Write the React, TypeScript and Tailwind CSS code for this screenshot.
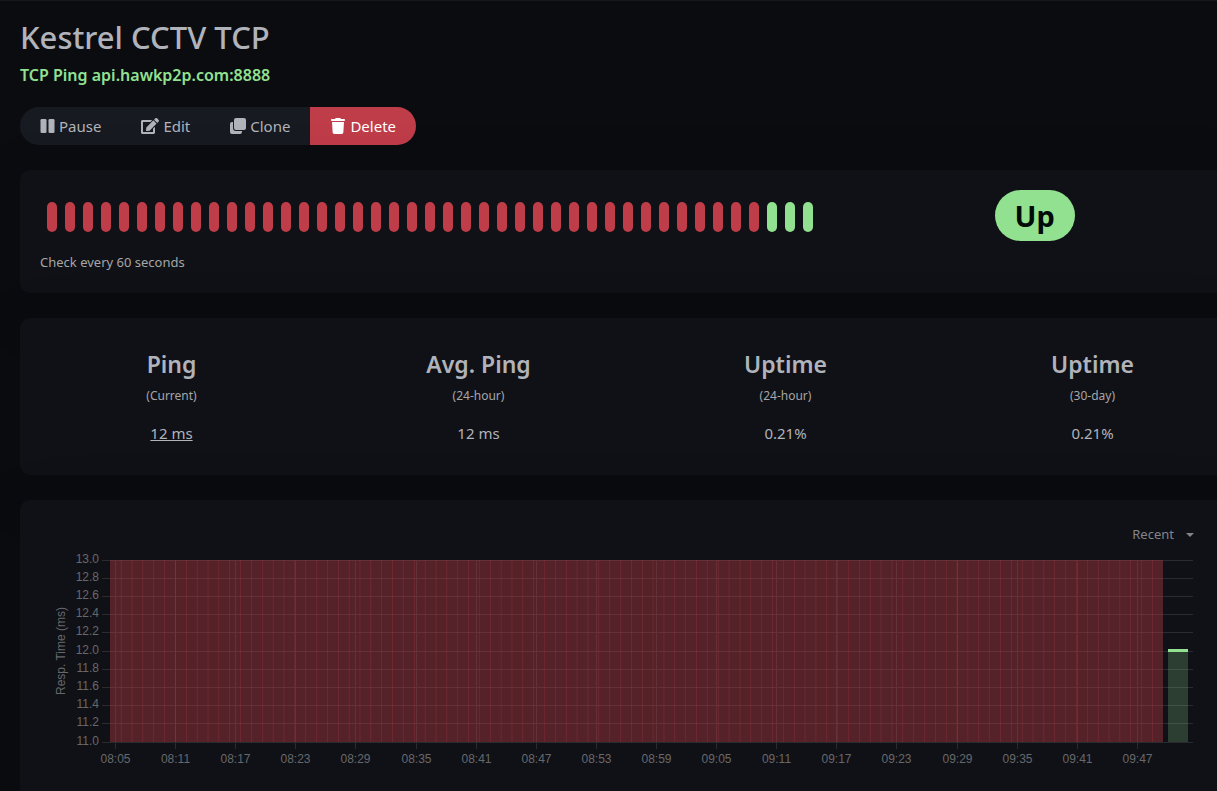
import { FaTrash } from 'react-icons/fa6'
import { FaEdit } from 'react-icons/fa'

interface Stat {
  title: string
  period: string
  value: string
  underline?: boolean
}

const DOWN_BEATS = 40
const UP_BEATS = 3

const beats = [
  ...Array.from({ length: DOWN_BEATS }, () => 'down'),
  ...Array.from({ length: UP_BEATS }, () => 'up'),
]

const stats: Stat[] = [
  { title: 'Ping', period: '(Current)', value: '12 ms', underline: true },
  { title: 'Avg. Ping', period: '(24-hour)', value: '12 ms' },
  { title: 'Uptime', period: '(24-hour)', value: '0.21%' },
  { title: 'Uptime', period: '(30-day)', value: '0.21%' },
]

const yLabels = ['13.0', '12.8', '12.6', '12.4', '12.2', '12.0', '11.8', '11.6', '11.4', '11.2', '11.0']

const xLabels = [
  '08:05', '08:11', '08:17', '08:23', '08:29', '08:35', '08:41', '08:47', '08:53',
  '08:59', '09:05', '09:11', '09:17', '09:23', '09:29', '09:35', '09:41', '09:47',
]

// Plot area inside the chart's own coordinate system
const PLOT = { left: 60, right: 1143, top: 10, bottom: 192 }
const DOWN_END = 1113
const BAR_COUNT = 97

function PauseIcon() {
  return (
    <svg width="15" height="16" viewBox="0 0 15 16" fill="currentColor" aria-hidden="true">
      <rect x="0.5" y="1" width="6" height="14" rx="1.3" />
      <rect x="8.5" y="1" width="6" height="14" rx="1.3" />
    </svg>
  )
}

function CloneIcon() {
  return (
    <svg width="16" height="16" viewBox="0 0 16 16" fill="currentColor" aria-hidden="true">
      <rect x="4" y="0" width="12" height="12" rx="2" />
      <path d="M3 4H2a2 2 0 0 0-2 2v8a2 2 0 0 0 2 2h8a2 2 0 0 0 2-2v-1H6a3 3 0 0 1-3-3z" />
    </svg>
  )
}

function ResponseChart() {
  const rowStep = (PLOT.bottom - PLOT.top) / (yLabels.length - 1)
  const barStep = (DOWN_END - PLOT.left) / BAR_COUNT

  return (
    <svg
      viewBox="0 0 1144 222"
      className="block h-auto w-full font-['Liberation_Sans',sans-serif] text-[12px]"
      role="img"
      aria-label="Response time"
    >
      {yLabels.map((label, i) => {
        const y = Math.floor(PLOT.top + i * rowStep) + 0.5
        return (
          <g key={label}>
            <line x1={52} x2={PLOT.right} y1={y} y2={y} stroke="#292b2f" />
            <text x={49} y={y + 2.5} textAnchor="end" fill="#67686b">{label}</text>
          </g>
        )
      })}
      {xLabels.map((label, i) => {
        const x = Math.floor(65.4 + i * 60.12) + 0.5
        return (
          <g key={label}>
            <line x1={x} x2={x} y1={PLOT.top} y2={199} stroke="#292b2f" />
            <text x={x} y={213} textAnchor="middle" fill="#67686b">{label}</text>
          </g>
        )
      })}
      <text transform="translate(15 101) rotate(-90)" textAnchor="middle" fill="#67686b">
        Resp. Time (ms)
      </text>

      {Array.from({ length: BAR_COUNT }, (_, i) => (
        <rect
          key={i}
          x={PLOT.left + i * barStep}
          y={PLOT.top}
          width={i === BAR_COUNT - 1 ? barStep : barStep + 0.6}
          height={PLOT.bottom - PLOT.top}
          fill="#bf3c49"
          fillOpacity={0.4}
        />
      ))}

      <rect x={1118} y={101} width={20} height={91} fill="#92e191" fillOpacity={0.22} />
      <rect x={1118} y={99} width={20} height={3} fill="#92e191" />
    </svg>
  )
}

export default function App() {
  return (
    <div className="min-h-screen overflow-hidden border-t border-[#16181e] bg-[#0b0c10] pl-5 font-['Noto_Sans',sans-serif] text-[15px] text-[#b1b3bb]">
      {/* Header */}
      <header className="pt-4">
        <h1 className="text-[31px] leading-10 font-medium">Kestrel CCTV TCP</h1>
        <p className="mt-1.5 text-base leading-6 font-semibold text-[#92e191]">TCP Ping api.hawkp2p.com:8888</p>
      </header>

      <div className="mt-5 inline-flex h-[38px] overflow-hidden rounded-full bg-[#171a21]" role="group">
        <button type="button" className="flex items-center gap-1 px-5">
          <PauseIcon />
          Pause
        </button>
        <button type="button" className="flex items-center gap-1 px-5">
          <FaEdit className="size-[18px]" />
          Edit
        </button>
        <button type="button" className="flex items-center gap-1 px-5">
          <CloneIcon />
          Clone
        </button>
        <button type="button" className="flex items-center gap-1 bg-[#bf3c49] px-5 text-white">
          <FaTrash className="size-4" />
          Delete
        </button>
      </div>

      <main className="mt-[25px] -mr-[27px] flex flex-col gap-[25px]">
        {/* Heartbeats */}
        <section className="h-[123px] rounded-[10px] bg-[#101116] p-5 shadow-[0_15px_70px_rgba(0,0,0,0.1)]">
          <div className="-mx-3 grid grid-cols-3">
            <div className="col-span-2 px-3">
              <div className="flex gap-2 px-[7px] pt-3">
                {beats.map((beat, i) => (
                  <div
                    key={i}
                    className={`h-[30px] w-[10px] shrink-0 rounded-full ${beat === 'up' ? 'bg-[#92e191]' : 'bg-[#bf3c49]'}`}
                  />
                ))}
              </div>
              <p className="mt-5 text-[13px] leading-5 text-[#a5a6a8]">Check every 60 seconds</p>
            </div>
            <div className="flex items-start justify-center px-3">
              <span className="flex h-[51px] items-center rounded-full bg-[#92e191] px-5 text-[29px] font-bold text-[#020b05]">
                Up
              </span>
            </div>
          </div>
        </section>

        {/* Stats */}
        <section className="rounded-[10px] bg-[#101116] py-[30px] text-center shadow-[0_15px_70px_rgba(0,0,0,0.1)]">
          <div className="-mx-0.5 grid grid-cols-4">
            {stats.map((stat, i) => (
              <div key={i}>
                <h4 className="text-[23px] leading-8 font-semibold">{stat.title}</h4>
                <p className="mt-1 text-[12px] leading-6 text-[#a5a6a8]">{stat.period}</p>
                <p className="mt-[13px] leading-6">
                  {stat.underline ? <a href="#" className="underline">{stat.value}</a> : stat.value}
                </p>
              </div>
            ))}
          </div>
        </section>

        {/* Chart */}
        <section className="rounded-[10px] bg-[#101116] pt-[25px] pr-[50px] pb-10 pl-[30px] shadow-[0_15px_70px_rgba(0,0,0,0.1)]">
          <div className="flex justify-end">
            <button type="button" className="flex h-5 items-center gap-3 text-[13px] text-[#82848b]">
              Recent
              <svg width="8" height="4" viewBox="0 0 8 4" fill="currentColor" aria-hidden="true">
                <path d="M0 0h8L4 4z" />
              </svg>
            </button>
          </div>
          <div className="mt-[5px]">
            <ResponseChart />
          </div>
        </section>
      </main>
    </div>
  )
}
